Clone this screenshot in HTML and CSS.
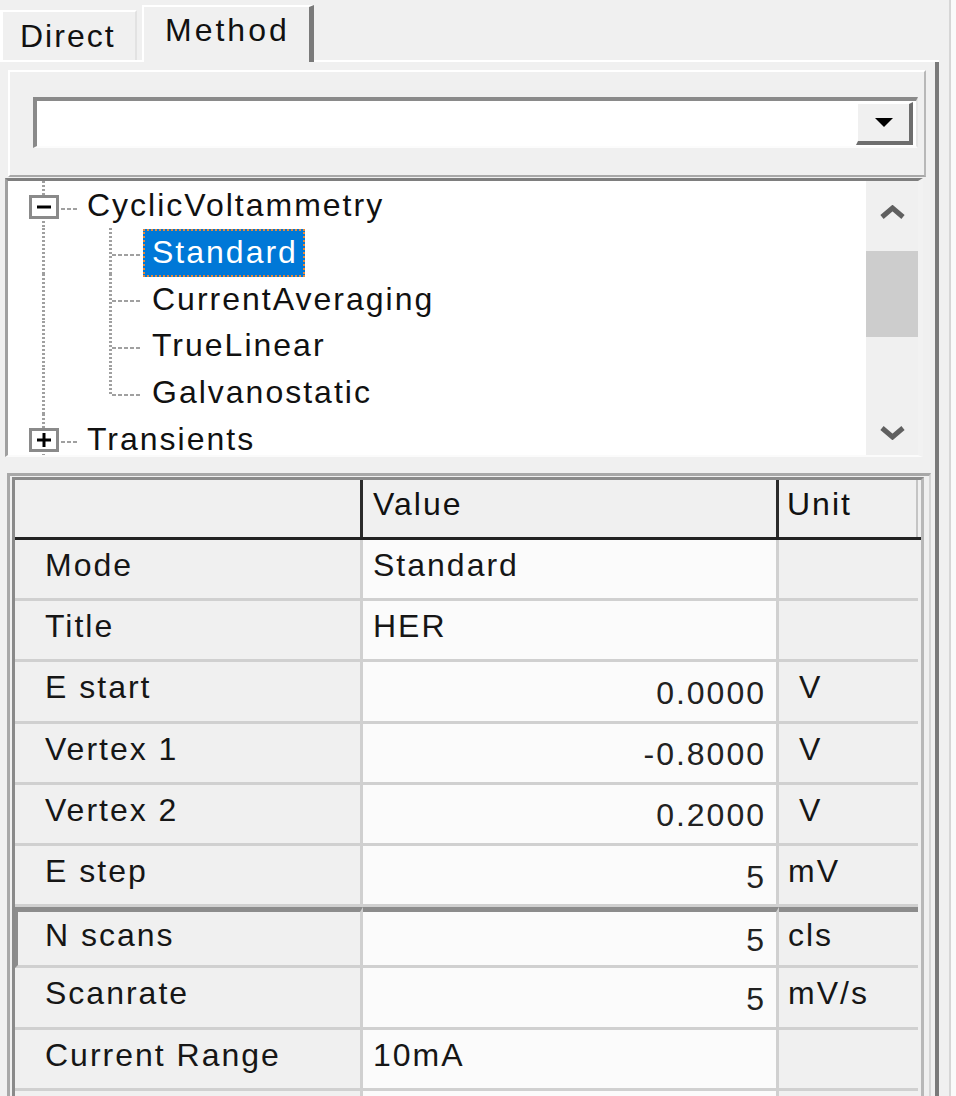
FILE: index.html
```html
<!DOCTYPE html>
<html lang="en">
<head>
<meta charset="utf-8">
<title>Method</title>
<link rel="stylesheet" href="styles.css">
</head>
<body>
<div class="window">
  <div class="tabs">
    <div class="tab direct">Direct</div>
    <div class="tab method">Method</div>
  </div>
  <div class="panel">
    <div class="group">
      <div class="combo">
        <div class="combo-btn">
          <svg width="18" height="10" viewBox="0 0 18 10"><polygon points="0,0 18,0 9,9" fill="#000"/></svg>
        </div>
      </div>
    </div>
    <div class="tree">
      <div class="items">
        <div class="node">
          <span class="g0 root">
            <svg class="exp" width="30" height="24" viewBox="0 0 30 24"><rect x="1.5" y="1.5" width="27" height="21" fill="#fff" stroke="#8a8a8a" stroke-width="3"/><line x1="8" y1="12" x2="22" y2="12" stroke="#000" stroke-width="3"/></svg>
          </span>
          <span class="label">CyclicVoltammetry</span>
        </div>
        <div class="node">
          <span class="g0"></span><span class="g1"></span>
          <span class="label sel">Standard</span>
        </div>
        <div class="node">
          <span class="g0"></span><span class="g1"></span>
          <span class="label">CurrentAveraging</span>
        </div>
        <div class="node">
          <span class="g0"></span><span class="g1"></span>
          <span class="label">TrueLinear</span>
        </div>
        <div class="node">
          <span class="g0"></span><span class="g1 last"></span>
          <span class="label">Galvanostatic</span>
        </div>
        <div class="node">
          <span class="g0 root">
            <svg class="exp" width="30" height="24" viewBox="0 0 30 24"><rect x="1.5" y="1.5" width="27" height="21" fill="#fff" stroke="#8a8a8a" stroke-width="3"/><line x1="8" y1="12" x2="22" y2="12" stroke="#000" stroke-width="3"/><line x1="15" y1="5" x2="15" y2="19" stroke="#000" stroke-width="3"/></svg>
          </span>
          <span class="label">Transients</span>
        </div>
      </div>
      <div class="sb">
        <div class="sb-btn up">
          <svg width="25" height="14" viewBox="0 0 25 14"><polyline points="2,12 12.5,3 23,12" fill="none" stroke="#606060" stroke-width="5"/></svg>
        </div>
        <div class="sb-track"><div class="thumb"></div></div>
        <div class="sb-btn down">
          <svg width="25" height="14" viewBox="0 0 25 14"><polyline points="2,2 12.5,11 23,2" fill="none" stroke="#606060" stroke-width="5"/></svg>
        </div>
      </div>
    </div>
    <div class="grid">
      <div class="table">
        <div class="hrow">
          <div class="hc"></div>
          <div class="hc">Value</div>
          <div class="hc unit-h">Unit</div>
        </div>
        <div class="prow"><div class="c lbl">Mode</div><div class="c val">Standard</div><div class="c unit"></div></div>
        <div class="prow"><div class="c lbl">Title</div><div class="c val">HER</div><div class="c unit"></div></div>
        <div class="prow"><div class="c lbl">E start</div><div class="c val num">0.0000</div><div class="c unit"> V</div></div>
        <div class="prow"><div class="c lbl">Vertex 1</div><div class="c val num">-0.8000</div><div class="c unit"> V</div></div>
        <div class="prow"><div class="c lbl">Vertex 2</div><div class="c val num">0.2000</div><div class="c unit"> V</div></div>
        <div class="prow"><div class="c lbl">E step</div><div class="c val num">5</div><div class="c unit">mV</div></div>
        <div class="prow focus"><div class="c lbl">N scans</div><div class="c val num">5</div><div class="c unit">cls</div></div>
        <div class="prow"><div class="c lbl">Scanrate</div><div class="c val num">5</div><div class="c unit">mV/s</div></div>
        <div class="prow"><div class="c lbl">Current Range</div><div class="c val">10mA</div><div class="c unit"></div></div>
        <div class="prow"><div class="c lbl"></div><div class="c val"></div><div class="c unit"></div></div>
      </div>
    </div>
  </div>
</div>
</body>
</html>
```
FILE: styles.css
```css
html, body {
  margin: 0;
  padding: 0;
}
body {
  background: #fafafa;
  font-family: "Liberation Sans", Arial, sans-serif;
  font-size: 32px;
  letter-spacing: 2px;
  color: #111;
  height: 1096px;
  overflow: hidden;
}
.window {
  width: 949px;
  height: 1096px;
  background: #f0f0f0;
  border-right: 2px solid #d6d6d6;
  display: flex;
  flex-direction: column;
  overflow: hidden;
}

/* Tabs */
.tabs {
  flex: none;
  width: 939px;
  height: 62px;
  display: flex;
  align-items: flex-end;
  background: linear-gradient(#fff, #fff) left bottom / 100% 2px no-repeat;
}
.tab {
  box-sizing: border-box;
  display: flex;
  align-items: center;
  background: #f0f0f0;
  white-space: nowrap;
}
.tab.direct {
  width: 137px;
  height: 50px;
  margin-bottom: 2px;
  border-left: 3px solid #fff;
  border-top: 2px solid #fff;
  border-right: 2px solid #e2e2e2;
  padding-left: 17px;
}
.tab.method {
  margin-left: 5px;
  width: 172px;
  height: 57px;
  border-left: 2px solid #fff;
  border-top: 2px solid #fff;
  border-right: 5px solid #7a7a7a;
  padding-left: 21px;
  padding-bottom: 9px;
  letter-spacing: 3px;
}

/* Panel */
.panel {
  flex: 1;
  min-height: 0;
  width: 939px;
  box-sizing: border-box;
  border-right: 4px solid #7a7a7a;
  display: flex;
  flex-direction: column;
}
.group {
  flex: none;
  margin: 8px 0 0 8px;
  width: 918px;
  height: 107px;
  box-sizing: border-box;
  border-top: 2px solid #fff;
  border-left: 2px solid #fff;
  border-right: 2px solid #b8b8b8;
  border-bottom: 2px solid #a8a8a8;
  padding: 25px 0 0 23px;
}
.combo {
  width: 885px;
  height: 51px;
  box-sizing: border-box;
  border-top: 4px solid #8a8a8a;
  border-left: 4px solid #8a8a8a;
  border-right: 2px solid #e6e6e6;
  border-bottom: 2px solid #fcfcfc;
  background: #fff;
  display: flex;
  justify-content: flex-end;
  padding: 1px 3px 1px 0;
}
.combo-btn {
  width: 57px;
  box-sizing: border-box;
  border-top: 2px solid #fff;
  border-left: 2px solid #fff;
  border-right: 4px solid #6e6e6e;
  border-bottom: 4px solid #6e6e6e;
  background: #f0f0f0;
  display: flex;
  align-items: center;
  justify-content: center;
}

/* Tree */
.tree {
  flex: none;
  margin: 1px 0 0 5px;
  width: 918px;
  height: 279px;
  box-sizing: border-box;
  border-top: 3px solid #7e7e7e;
  border-left: 3px solid #a0a0a0;
  border-right: 5px solid #f2f2f2;
  border-bottom: 2px solid #fbfbfb;
  background: #fff;
  display: flex;
}
.items {
  flex: 1;
  overflow: hidden;
}
.node {
  height: 46.7px;
  display: flex;
  align-items: stretch;
  white-space: nowrap;
}
.g0, .g1 {
  flex: none;
  display: flex;
  align-items: center;
  background-repeat: no-repeat;
}
.g0 {
  width: 70px;
  background-image: repeating-linear-gradient(to bottom, #a0a0a0 0 2px, transparent 2px 4px);
  background-size: 3px 100%;
  background-position: 34px 0;
}
.g0.root {
  background-image:
    repeating-linear-gradient(to bottom, #a0a0a0 0 2px, transparent 2px 4px),
    repeating-linear-gradient(to right, #a0a0a0 0 4px, transparent 4px 6px);
  background-size: 3px 100%, 16px 2px;
  background-position: 34px 0, 53px 60%;
}
.exp {
  margin: 5px 0 0 21px;
  display: block;
}
.g1 {
  width: 65px;
  background-image:
    repeating-linear-gradient(to bottom, #a0a0a0 0 2px, transparent 2px 4px),
    repeating-linear-gradient(to right, #a0a0a0 0 4px, transparent 4px 6px);
  background-size: 3px 100%, 30px 2px;
  background-position: 31px 0, 34px 58%;
}
.g1.last {
  background-size: 3px 58%, 30px 2px;
}
.label {
  display: flex;
  align-items: center;
  padding: 3px 0 0 9px;
  color: #111;
}
.label.sel {
  align-self: center;
  height: 48px;
  box-sizing: border-box;
  margin-top: 3px;
  padding: 0 5px 0 7px;
  background: #0078d7;
  color: #fff;
  border: 2px dotted #e8893a;
}

/* Scrollbar */
.sb {
  flex: none;
  width: 52px;
  background: #f0f0f0;
  display: flex;
  flex-direction: column;
}
.sb-btn {
  display: flex;
  align-items: center;
  justify-content: center;
}
.sb-btn.up { height: 62px; }
.sb-btn.down { height: 44px; }
.sb-track {
  flex: 1;
  padding-top: 8px;
}
.thumb {
  height: 86px;
  background: #cdcdcd;
}

/* Property grid */
.grid {
  flex: none;
  align-self: flex-start;
  margin: 16px 0 0 7px;
  border-top: 3px solid #a8a8a8;
  border-left: 3px solid #a8a8a8;
  border-right: 2px solid #d6d6d6;
  padding: 1px 5px 0 2px;
}
.table {
  width: 906px;
  border-top: 3px solid #8a8a8a;
  border-left: 3px solid #8a8a8a;
  border-right: 3px solid #b8b8b8;
}
.hrow, .prow {
  display: grid;
  grid-template-columns: 348px 416px 139px;
}
.hrow {
  height: 60px;
  box-sizing: border-box;
  border-bottom: 3px solid #222;
}
.hc {
  background: #f0f0f0;
  display: flex;
  align-items: center;
  padding: 0 0 8px 10px;
  box-sizing: border-box;
  border-right: 3px solid #2a2a2a;
}
.hc.unit-h {
  border-right: 2px solid #c4c4c4;
  padding-left: 8px;
}
.prow {
  height: 61.2px;
}
.c {
  box-sizing: border-box;
  display: flex;
  align-items: center;
  border-bottom: 3px solid #d0d0d0;
  white-space: pre;
  padding-bottom: 7px;
  color: #161616;
}
.c.lbl {
  background: #f0f0f0;
  border-right: 3px solid #d0d0d0;
  padding-left: 30px;
}
.c.val {
  background: #fbfbfb;
  border-right: 3px solid #d0d0d0;
  padding-left: 10px;
}
.c.val.num {
  justify-content: flex-end;
  padding: 4px 10px 0 0;
  color: #222;
}
.c.unit {
  background: #f0f0f0;
  padding-left: 9px;
}
.prow.focus .c {
  border-top: 5px solid #8c8c8c;
}
.prow.focus .c.lbl {
  border-left: 3px solid #8c8c8c;
  padding-left: 27px;
}
```
